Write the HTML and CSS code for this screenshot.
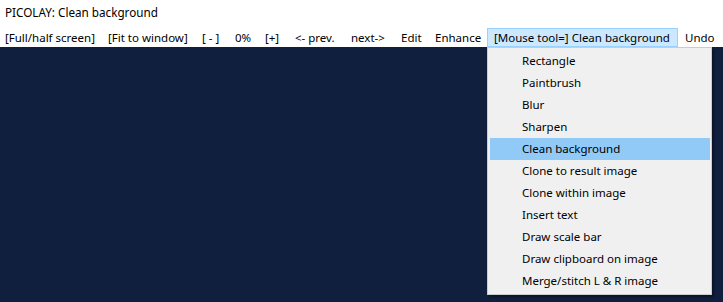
FILE: index.html
```html
<!DOCTYPE html>
<html>
<head>
<meta charset="utf-8">
<link rel="stylesheet" href="styles.css">
</head>
<body>
<div class="app">
  <div class="title">PICOLAY: Clean background</div>
  <div class="menubar">
    <span class="mi w-full">[Full/half screen]</span>
    <span class="mi w-fit">[Fit to window]</span>
    <span class="mi w-minus">[ - ]</span>
    <span class="mi w-pct">0%</span>
    <span class="mi w-plus">[+]</span>
    <span class="mi w-prev">&lt;- prev.</span>
    <span class="mi w-next">next-&gt;</span>
    <span class="mi w-edit">Edit</span>
    <span class="mi w-enh">Enhance</span>
    <span class="mi w-mouse active">[Mouse tool=] Clean background
      <div class="dropdown">
        <div class="di">Rectangle</div>
        <div class="di">Paintbrush</div>
        <div class="di">Blur</div>
        <div class="di">Sharpen</div>
        <div class="di sel">Clean background</div>
        <div class="di">Clone to result image</div>
        <div class="di">Clone within image</div>
        <div class="di">Insert text</div>
        <div class="di">Draw scale bar</div>
        <div class="di">Draw clipboard on image</div>
        <div class="di">Merge/stitch L &amp; R image</div>
      </div>
    </span>
    <span class="mi w-undo">Undo</span>
  </div>
  <div class="canvas"></div>
</div>
</body>
</html>
```

FILE: styles.css
```css
html, body {
  margin: 0;
  padding: 0;
  width: 723px;
  height: 302px;
  overflow: hidden;
  background: #0f1f3d;
}
.app {
  display: flex;
  flex-direction: column;
  height: 302px;
  font-family: "Noto Sans", "Open Sans", sans-serif;
  font-size: 11.5px;
  color: #000;
}
.title {
  background: #fff;
  height: 24px;
  line-height: 24px;
  padding-left: 5px;
  font-size: 11.7px;
}
.menubar {
  background: #fff;
  height: 23px;
  display: flex;
  align-items: flex-start;
  padding-top: 4px;
  box-sizing: border-box;
}
.mi {
  position: relative;
  box-sizing: border-box;
  height: 19px;
  line-height: 17px;
  padding-left: 6px;
  border: 1px solid transparent;
  white-space: nowrap;
  flex: none;
}
.w-full { width: 101px; padding-left: 4px; }
.w-fit { width: 94px; }
.w-minus { width: 33px; }
.w-pct { width: 30px; }
.w-plus { width: 30px; }
.w-prev { width: 56px; }
.w-next { width: 50px; }
.w-edit { width: 34px; }
.w-enh { width: 59px; }
.w-mouse { width: 191px; }
.w-undo { width: 42px; }
.mi.active {
  background: #cce8ff;
  border-color: #99d1ff;
}
.dropdown {
  position: absolute;
  left: -1px;
  top: 18px;
  width: 225px;
  box-sizing: border-box;
  background: #f0f0f0;
  border: 1px solid #cccccc;
  box-shadow: 2px 2px 2px rgba(0,0,0,0.35);
  padding: 2px 0;
  z-index: 5;
}
.di {
  height: 22px;
  line-height: 22px;
  padding-left: 32px;
  margin: 0 1px 0 2px;
}
.di.sel {
  background: #91c9f7;
}
.canvas {
  flex: 1;
  background: #0f1f3d;
}
```
